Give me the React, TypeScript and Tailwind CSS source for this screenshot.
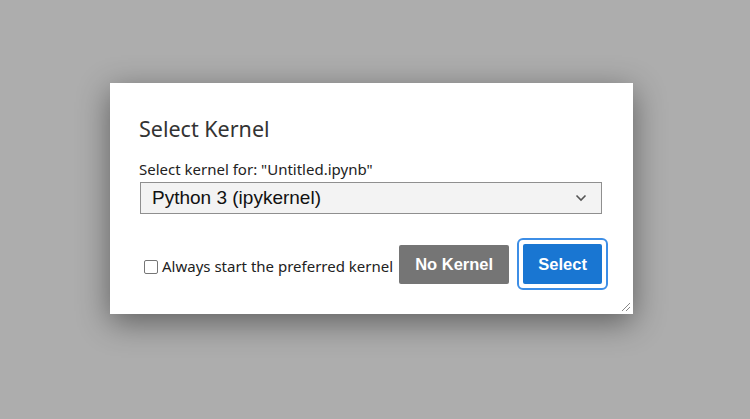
import React from "react";

export default function App() {
  return (
    <div className="w-[750px] h-[419px] bg-[#adadad] overflow-hidden pt-[83px] pl-[110px]" style={{ fontFamily: '"Segoe UI", "Noto Sans", sans-serif' }}>
      <div className="relative w-[523px] h-[231px] bg-white shadow-[0_8px_30px_rgba(0,0,0,0.45)] flex flex-col pl-[29px] pr-[20px] pt-[32px]">
        <h1 className="text-[21.5px] leading-[28px] text-[#333] font-normal">Select Kernel</h1>
        <label className="mt-[17px] text-[15px] leading-[18px] text-[#222] whitespace-nowrap">Select kernel for: "Untitled.ipynb"</label>
        <div className="mt-[4px] ml-[1px] h-[32px] w-[462px] border border-[#8f8f8f] bg-[#f3f3f3] flex items-center justify-between pl-[11px] pr-[14px]">
          <span className="text-[19px] text-[#111]" style={{ fontFamily: '"Liberation Sans", Arial, sans-serif' }}>Python 3 (ipykernel)</span>
          <svg width="12" height="8" viewBox="0 0 12 8" fill="none">
            <path d="M1.5 1.5 L6 6 L10.5 1.5" stroke="#555" strokeWidth="1.6" />
          </svg>
        </div>
        <div className="mt-[25px] flex items-center">
          <label className="ml-[5px] flex items-center text-[15px] text-[#222] mt-[4px] whitespace-nowrap shrink-0">
            <span className="w-[14px] h-[14px] border border-[#767676] rounded-[2px] bg-white mr-[4px] shrink-0" />
            Always start the preferred kernel
          </label>
          <button className="ml-[6px] shrink-0 w-[110px] h-[39px] bg-[#757575] text-white font-bold text-[16.5px] rounded-[2px]" style={{ fontFamily: '"Liberation Sans", Arial, sans-serif' }}>No Kernel</button>
          <div className="ml-[8px] -mt-[1px] shrink-0 p-[4px] border-2 border-[#3d8ee6] rounded-[6px] bg-white">
            <button className="w-[79px] h-[40px] bg-[#1976d2] text-white font-bold text-[16.5px] rounded-[2px] block" style={{ fontFamily: '"Liberation Sans", Arial, sans-serif' }}>Select</button>
          </div>
        </div>
        <svg className="absolute right-[2px] bottom-[2px]" width="10" height="10" viewBox="0 0 10 10">
          <path d="M1 9 L9 1 M5 9 L9 5" stroke="#888" strokeWidth="1" />
        </svg>
      </div>
    </div>
  );
}
